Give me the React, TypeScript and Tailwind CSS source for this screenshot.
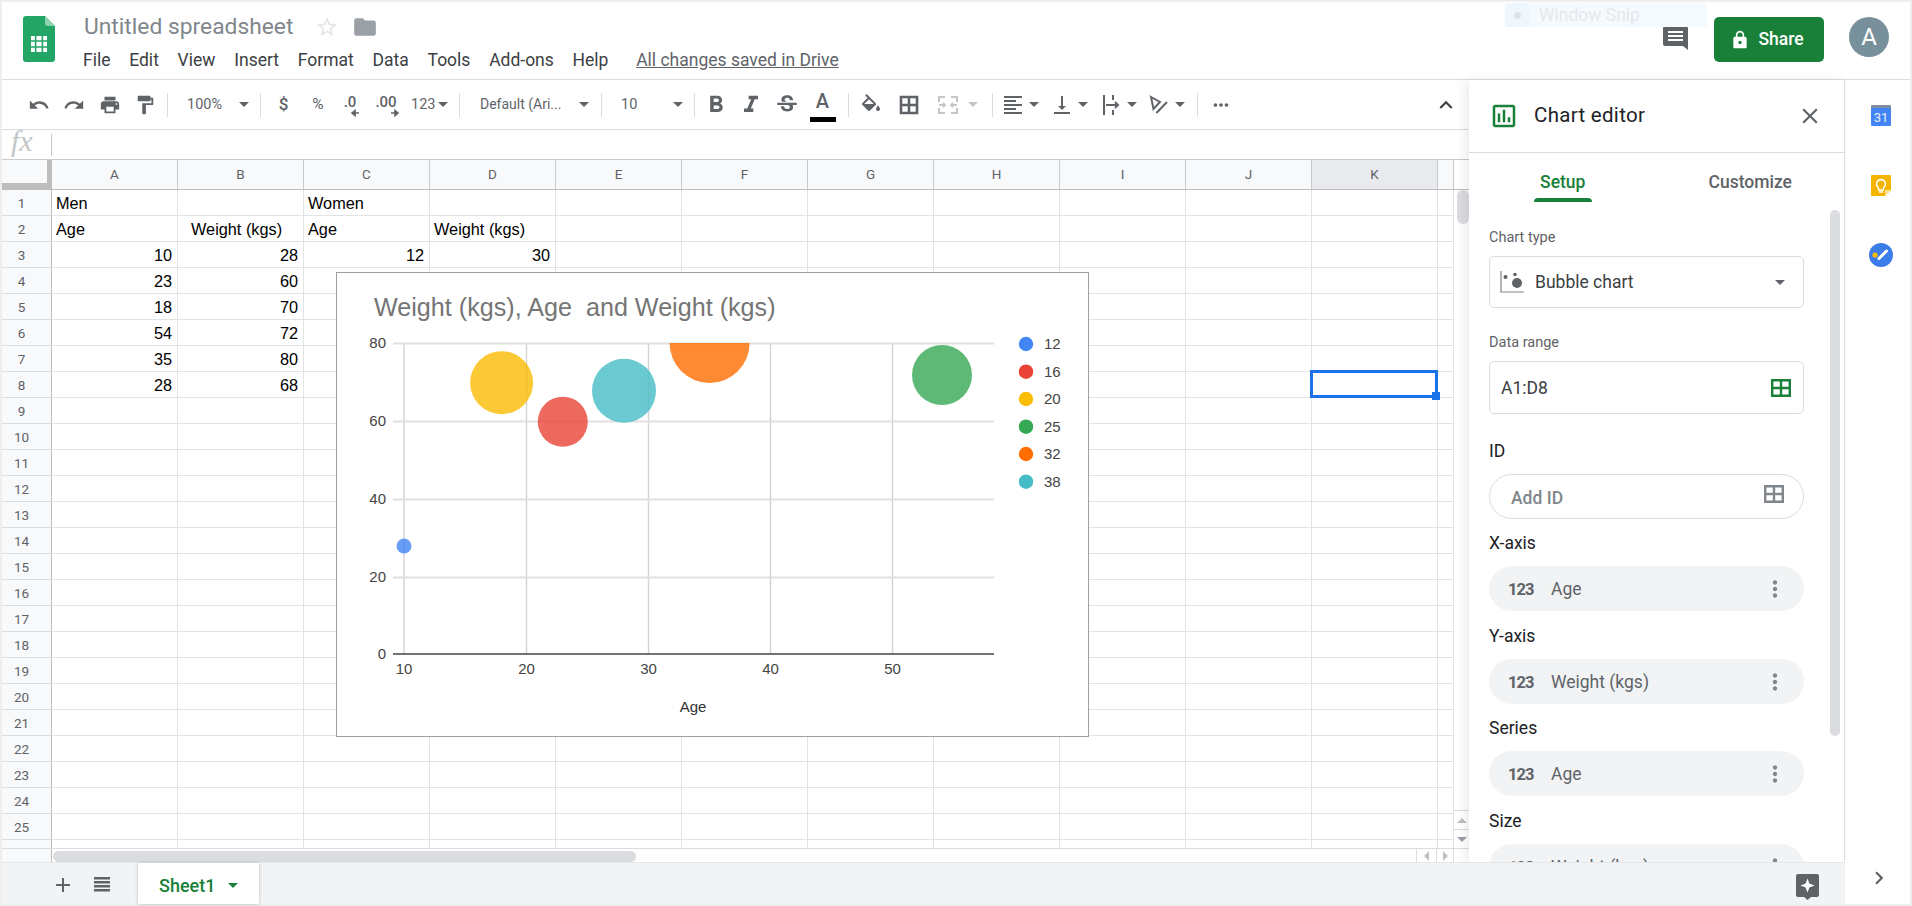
import React from "react";
import {
  MdUndo,
  MdRedo,
  MdPrint,
  MdFormatPaint,
  MdFormatBold,
  MdFormatItalic,
  MdStrikethroughS,
  MdFormatAlignLeft,
  MdVerticalAlignBottom,
  MdMoreHoriz,
  MdExpandLess,
  MdClose,
  MdStarBorder,
  MdFolder,
  MdLock,
  MdAdd,
  MdMoreVert,
  MdKeyboardArrowRight,
  MdOutlineAssessment,
} from "react-icons/md";

const COLUMNS = ["A", "B", "C", "D", "E", "F", "G", "H", "I", "J", "K"];
const MENU = ["File", "Edit", "View", "Insert", "Format", "Data", "Tools", "Add-ons", "Help"];

type Cell = { text: string; align?: "right" | "indent" };

const CELLS: Record<string, Cell> = {
  A1: { text: "Men" },
  C1: { text: "Women" },
  A2: { text: "Age" },
  B2: { text: "Weight (kgs)", align: "indent" },
  C2: { text: "Age" },
  D2: { text: "Weight (kgs)" },
  A3: { text: "10", align: "right" },
  B3: { text: "28", align: "right" },
  C3: { text: "12", align: "right" },
  D3: { text: "30", align: "right" },
  A4: { text: "23", align: "right" },
  B4: { text: "60", align: "right" },
  A5: { text: "18", align: "right" },
  B5: { text: "70", align: "right" },
  A6: { text: "54", align: "right" },
  B6: { text: "72", align: "right" },
  A7: { text: "35", align: "right" },
  B7: { text: "80", align: "right" },
  A8: { text: "28", align: "right" },
  B8: { text: "68", align: "right" },
};

function Caret({ className = "text-[#5f6368]" }: { className?: string }) {
  return (
    <svg width="10" height="5" viewBox="0 0 10 5" className={`shrink-0 ${className}`}>
      <path d="M0 0h10L5 5z" fill="currentColor" />
    </svg>
  );
}

function Sep() {
  return <div className="h-[24px] w-px shrink-0 bg-[#dadce0]" />;
}

function Tool({
  icon: Icon,
  width,
  size = 22,
}: {
  icon: React.ComponentType<{ size?: number }>;
  width: string;
  size?: number;
}) {
  return (
    <div className={`flex items-center justify-center ${width}`}>
      <Icon size={size} />
    </div>
  );
}

function SheetsLogo() {
  return (
    <svg width="32" height="46" viewBox="0 0 32 46" className="shrink-0">
      <path d="M3 0h19l10 10v33a3 3 0 0 1-3 3H3a3 3 0 0 1-3-3V3a3 3 0 0 1 3-3z" fill="#23a566" />
      <path d="M22 0l10 10h-7a3 3 0 0 1-3-3z" fill="#8ed1b1" />
      <path d="M8 20h16v16H8z" fill="#fff" />
      <path d="M12.6 20v16M19.4 20v16M8 25h16M8 31h16" stroke="#23a566" strokeWidth="1.6" />
    </svg>
  );
}

function DecimalIcon({ label, arrow }: { label: string; arrow: "left" | "right" }) {
  return (
    <svg width="30" height="30" viewBox="0 0 30 30" className="font-[Roboto,sans-serif]">
      <text x="15" y="17" textAnchor="middle" fontSize="15" fontWeight="500" fill="#5f6368">
        {label}
      </text>
      {arrow === "left" ? (
        <path d="M24 23h-7M20 20.5l-3 2.5 3 2.5z" stroke="#5f6368" strokeWidth="1.6" fill="#5f6368" />
      ) : (
        <path d="M20 23h7M24 20.5l3 2.5-3 2.5z" stroke="#5f6368" strokeWidth="1.6" fill="#5f6368" />
      )}
    </svg>
  );
}

function FillIcon() {
  return (
    <svg width="24" height="24" viewBox="0 0 24 24" fill="#5f6368">
      <path
        transform="translate(1 1)"
        d="M16.56 8.94L7.62 0 6.21 1.41l2.38 2.38-5.15 5.15c-.59.59-.59 1.54 0 2.12l5.5 5.5c.29.29.68.44 1.06.44s.77-.15 1.06-.44l5.5-5.5c.59-.58.59-1.53 0-2.12zM5.21 10L10 5.21 14.79 10H5.21zM19 11.5s-2 2.17-2 3.5c0 1.1.9 2 2 2s2-.9 2-2c0-1.33-2-3.5-2-3.5z"
      />
    </svg>
  );
}

function BordersIcon() {
  return (
    <svg width="24" height="24" viewBox="0 0 24 24" fill="none" stroke="#5f6368" strokeWidth="2.6">
      <path d="M4 4h16v16H4zM12 4v16M4 12h16" />
    </svg>
  );
}

function MergeIcon() {
  return (
    <svg width="24" height="24" viewBox="0 0 24 24" fill="none" stroke="#c4c7c9" strokeWidth="2">
      <path d="M9 4H3v5M15 4h6v5M9 20H3v-5M15 20h6v-5M3 12h6M7 10l2 2-2 2M21 12h-6M17 10l-2 2 2 2" />
    </svg>
  );
}

function WrapIcon() {
  return (
    <svg width="24" height="24" viewBox="0 0 24 24" fill="none" stroke="#5f6368" strokeWidth="2">
      <path d="M4 2v20M13 2v5M13 17v5M6 12h12M15 9l3 3-3 3" />
    </svg>
  );
}

function RotateIcon() {
  return (
    <svg width="24" height="24" viewBox="0 0 24 24" fill="none" stroke="#5f6368" strokeWidth="2">
      <path d="M4 4l9 5-6.500 7zM20 9L9.400 20" />
    </svg>
  );
}

function CommentIcon() {
  return (
    <svg width="25" height="24" viewBox="0 0 25 24">
      <path d="M2 0h21a2 2 0 0 1 2 2v22l-5-4H2a2 2 0 0 1-2-2V2a2 2 0 0 1 2-2z" fill="#5f6368" />
      <path d="M5 5h15v2H5zM5 9h15v2H5zM5 13h15v2H5z" fill="#fff" />
    </svg>
  );
}

function GridIcon({ color, className }: { color: string; className: string }) {
  return (
    <svg viewBox="0 0 20 18" className={className} fill="none" stroke={color} strokeWidth="2.4">
      <path d="M1.200 1.200h17.600v15.600H1.200zM10 1v16M1 9h18" />
    </svg>
  );
}

function BubbleIcon() {
  return (
    <svg width="24" height="22" viewBox="0 0 24 22" fill="#5f6368">
      <path d="M1 0v21h23" fill="none" stroke="#80868b" strokeWidth="1.2" />
      <circle cx="5.5" cy="6" r="2" />
      <circle cx="15" cy="3.5" r="1.8" />
      <circle cx="17" cy="12" r="5" />
    </svg>
  );
}

function CalendarIcon() {
  return (
    <svg width="20" height="21" viewBox="0 0 20 21" className="font-[Roboto,sans-serif]">
      <path d="M0 1a1 1 0 0 1 1-1h18a1 1 0 0 1 1 1v3H0z" fill="#7f8ea3" />
      <rect y="3" width="20" height="18" rx="1" fill="#4285f4" />
      <text x="10" y="17" textAnchor="middle" fontSize="13" fill="#e8f0fe">
        31
      </text>
    </svg>
  );
}

function KeepIcon() {
  return (
    <svg width="20" height="21" viewBox="0 0 20 21">
      <path d="M1 0h18a1 1 0 0 1 1 1v14l-6 6H1a1 1 0 0 1-1-1V1a1 1 0 0 1 1-1z" fill="#f4b400" />
      <path d="M14 21v-6h6z" fill="#fde293" />
      <path
        d="M10 4.500a4.500 4.500 0 0 0-2.500 8.200V15h5v-2.300A4.500 4.500 0 0 0 10 4.500zM8 17h4"
        fill="none"
        stroke="#fff"
        strokeWidth="1.3"
      />
    </svg>
  );
}

function TasksIcon() {
  return (
    <svg width="24" height="24" viewBox="0 0 24 24">
      <circle cx="12" cy="12" r="12" fill="#3b7de9" />
      <path d="M10 15.500L17.500 8" stroke="#fff" strokeWidth="3" strokeLinecap="round" />
      <circle cx="6" cy="12" r="2.6" fill="#fbbc04" />
    </svg>
  );
}

function ExploreIcon() {
  return (
    <svg width="23" height="26" viewBox="0 0 23 26">
      <path d="M2 0h19a2 2 0 0 1 2 2v19a2 2 0 0 1-2 2h-6l-3.500 3L8 23H2a2 2 0 0 1-2-2V2a2 2 0 0 1 2-2z" fill="#5f6368" />
      <path d="M11.500 4.500l1.900 5.100 5.100 1.900-5.100 1.900-1.900 5.100-1.900-5.100-5.100-1.900 5.100-1.900z" fill="#fff" />
    </svg>
  );
}

function SheetListIcon() {
  return (
    <svg width="16" height="15" viewBox="0 0 16 15" fill="#5f6368">
      <path d="M0 0h16v2.500H0zM0 4h16v2.500H0zM0 8h16v2.500H0zM0 12h16v2.500H0z" />
    </svg>
  );
}

function Header() {
  return (
    <header className="relative flex h-[78px] shrink-0 border-b border-[#dadce0] bg-white">
      <div className="ml-[21px] mt-[14px]">
        <SheetsLogo />
      </div>
      <div className="ml-[29px] flex flex-col pt-[10px]">
        <div className="flex h-[30px] items-center">
          <span className="text-[22.8px] leading-none text-[#80868b]">Untitled spreadsheet</span>
          <MdStarBorder size={24} className="ml-[22px] text-[#e3e5e6]" />
          <MdFolder size={26} className="ml-[13px] text-[#9aa0a6]" />
        </div>
        <nav className="-ml-[1px] mt-[4px] flex h-[28px] items-center gap-[18.75px] text-[17.5px] text-[#3c4043]">
          {MENU.map((item) => (
            <span key={item}>{item}</span>
          ))}
          <span className="ml-[9px] text-[#5f6368] underline">All changes saved in Drive</span>
        </nav>
      </div>
      <div className="absolute left-[1503px] top-[1px] flex h-[24px] w-[202px] items-center bg-[#f5faff]">
        <div className="flex h-full w-[24px] items-center justify-center bg-[#eef6fe]">
          <div className="h-[7px] w-[7px] rounded-full bg-[#dfe3e6]" />
        </div>
        <span className="ml-[10px] text-[17.5px] text-[#e6e8ea]">Window Snip</span>
      </div>
      <div className="ml-auto flex items-start pr-[21px] pt-[15px]">
        <div className="mt-[9px]">
          <CommentIcon />
        </div>
        <button className="ml-[26px] flex h-[45px] w-[110px] items-center justify-center gap-[8px] rounded-[5px] bg-[#188038] pr-[4px] text-[17.5px] font-medium text-white">
          <MdLock size={20} />
          Share
        </button>
        <div className="ml-[25px] flex h-[40px] w-[40px] items-center justify-center rounded-full bg-[#78909c] text-[24px] text-white">
          A
        </div>
      </div>
    </header>
  );
}

function Toolbar() {
  return (
    <div className="flex h-[50px] shrink-0 items-center border-b border-[#dadce0] pl-[19px] text-[14.5px] text-[#5f6368]">
      <Tool icon={MdUndo} width="w-[35px]" />
      <Tool icon={MdRedo} width="w-[36px]" />
      <Tool icon={MdPrint} width="w-[35px]" />
      <Tool icon={MdFormatPaint} width="w-[35px]" />
      <div className="ml-[5px]">
        <Sep />
      </div>
      <div className="flex w-[92px] items-center pl-[19px]">
        <span>100%</span>
        <span className="ml-auto mr-[11px]">
          <Caret />
        </span>
      </div>
      <Sep />
      <div className="ml-[5px] flex w-[35px] justify-center text-[17px] font-medium">$</div>
      <div className="flex w-[34px] justify-center text-[15.5px]">%</div>
      <div className="flex w-[30px] justify-center">
        <DecimalIcon label=".0" arrow="left" />
      </div>
      <div className="flex w-[42px] justify-center">
        <DecimalIcon label=".00" arrow="right" />
      </div>
      <div className="flex w-[50px] items-center pl-[4px]">
        <span>123</span>
        <span className="ml-[3px]">
          <Caret />
        </span>
      </div>
      <div className="ml-[2px]">
        <Sep />
      </div>
      <div className="flex w-[141px] items-center pl-[20px] text-[14px]">
        <span>Default (Ari...</span>
        <span className="ml-auto mr-[12px]">
          <Caret />
        </span>
      </div>
      <Sep />
      <div className="flex w-[92px] items-center pl-[19px]">
        <span>10</span>
        <span className="ml-auto mr-[11px]">
          <Caret />
        </span>
      </div>
      <Sep />
      <div className="ml-[3px] flex">
        <Tool icon={MdFormatBold} width="w-[35px]" size={28} />
        <Tool icon={MdFormatItalic} width="w-[35px]" size={28} />
        <Tool icon={MdStrikethroughS} width="w-[37px]" size={26} />
      </div>
      <div className="relative flex h-[34px] w-[35px] flex-col items-center">
        <span className="text-[20px] font-medium leading-[26px]">A</span>
        <div className="mt-auto h-[5px] w-[26px] bg-black" />
      </div>
      <div className="ml-[8px]">
        <Sep />
      </div>
      <div className="ml-[9px] flex items-center">
        <FillIcon />
      </div>
      <div className="ml-[15px] flex items-center">
        <BordersIcon />
      </div>
      <div className="ml-[15px] flex items-center">
        <MergeIcon />
        <span className="ml-[8px] mr-[14px]">
          <Caret className="text-[#c4c7c9]" />
        </span>
      </div>
      <Sep />
      <div className="ml-[8px] flex items-center">
        <MdFormatAlignLeft size={24} />
        <span className="ml-[4px]">
          <Caret />
        </span>
      </div>
      <div className="ml-[11px] flex items-center">
        <MdVerticalAlignBottom size={24} />
        <span className="ml-[4px]">
          <Caret />
        </span>
      </div>
      <div className="ml-[12px] flex items-center">
        <WrapIcon />
        <span className="ml-[3px]">
          <Caret />
        </span>
      </div>
      <div className="ml-[10px] flex items-center">
        <RotateIcon />
        <span className="ml-[4px] mr-[12px]">
          <Caret />
        </span>
      </div>
      <Sep />
      <Tool icon={MdMoreHoriz} width="ml-[5px] w-[35px]" />
      <MdExpandLess size={26} className="ml-auto mr-[10px] text-[#3c4043]" />
    </div>
  );
}

function FormulaBar() {
  return (
    <div className="flex h-[30px] shrink-0 items-center border-b border-[#c8cacc] bg-white">
      <span className="ml-[9px] -mt-[8px] w-[40px] font-['Liberation_Serif',serif] text-[30px] italic leading-none text-[#c4c7c9]">
        fx
      </span>
      <div className="h-[22px] w-px bg-[#c4c7c9]" />
    </div>
  );
}

function GridCell({ id }: { id: string }) {
  const cell = CELLS[id];
  const selected = id === "K8";
  let align = "pl-[4px]";
  if (cell?.align === "right") align = "justify-end pr-[5px]";
  if (cell?.align === "indent") align = "pl-[13px]";
  return (
    <div
      className={`relative flex h-[26px] w-[126px] shrink-0 items-center border-b border-r border-[#e2e3e3] pt-[1px] text-[16.3px] text-black ${align}`}
    >
      {cell?.text}
      {selected && (
        <>
          <div className="absolute -left-[2px] -top-[2px] z-10 h-[28px] w-[128px] border-[3px] border-[#1a73e8]" />
          <div className="absolute -bottom-[3px] -right-[3px] z-10 h-[8px] w-[8px] bg-[#1a73e8]" />
        </>
      )}
    </div>
  );
}

function BubbleChart() {
  const bubbles = [
    { cx: 404, cy: 546, r: 7.5, fill: "#4285f4" },
    { cx: 501.6, cy: 382.7, r: 31.5, fill: "#fbbc04" },
    { cx: 562.8, cy: 421.7, r: 25, fill: "#ea4335" },
    { cx: 624, cy: 390.7, r: 32, fill: "#46bdc6" },
    { cx: 709.6, cy: 343, r: 40, fill: "#ff6d01" },
    { cx: 942, cy: 375, r: 30, fill: "#34a853" },
  ];
  const legend = [
    { label: "12", cy: 344, fill: "#4285f4" },
    { label: "16", cy: 371.7, fill: "#ea4335" },
    { label: "20", cy: 399, fill: "#fbbc04" },
    { label: "25", cy: 426.7, fill: "#34a853" },
    { label: "32", cy: 454, fill: "#ff6d01" },
    { label: "38", cy: 481.7, fill: "#46bdc6" },
  ];
  const yTicks = [
    { label: "80", y: 343 },
    { label: "60", y: 421 },
    { label: "40", y: 499 },
    { label: "20", y: 577 },
    { label: "0", y: 654 },
  ];
  const xTicks = [
    { label: "10", x: 404 },
    { label: "20", x: 526.5 },
    { label: "30", x: 648.5 },
    { label: "40", x: 770.5 },
    { label: "50", x: 892.5 },
  ];

  return (
    <div className="absolute left-[334px] top-[82px] z-20 h-[465px] w-[753px] border border-[#9aa0a6] bg-white">
      <svg width="751" height="463" viewBox="337 273 751 463" className="font-['Liberation_Sans',sans-serif]">
        <defs>
          <clipPath id="plot">
            <rect x="393" y="343" width="601" height="311" />
          </clipPath>
        </defs>
        <text x="374" y="316" fontSize="25.15" fill="#757575" className="whitespace-pre">
          {"Weight (kgs), Age  and Weight (kgs)"}
        </text>
        {xTicks.map((t) => (
          <line key={t.label} x1={t.x} x2={t.x} y1="343" y2="654" stroke="#d3d3d3" strokeWidth="1.4" />
        ))}
        {yTicks.slice(0, 4).map((t) => (
          <line key={t.label} x1="393" x2="994" y1={t.y + 0.5} y2={t.y + 0.5} stroke="#e0e0e0" strokeWidth="1.8" />
        ))}
        <line x1="393" x2="994" y1="654" y2="654" stroke="#444" strokeWidth="1.4" />
        <g clipPath="url(#plot)">
          {bubbles.map((b) => (
            <circle key={b.cx} cx={b.cx} cy={b.cy} r={b.r} fill={b.fill} fillOpacity="0.8" />
          ))}
        </g>
        {yTicks.map((t) => (
          <text key={t.label} x="386" y={t.y + 5} textAnchor="end" fontSize="15" fill="#444">
            {t.label}
          </text>
        ))}
        {xTicks.map((t) => (
          <text key={t.label} x={t.x} y="673.5" textAnchor="middle" fontSize="15" fill="#444">
            {t.label}
          </text>
        ))}
        <text x="693" y="711.5" textAnchor="middle" fontSize="15" fill="#333">
          Age
        </text>
        {legend.map((l) => (
          <g key={l.label}>
            <circle cx="1026" cy={l.cy} r="7.2" fill={l.fill} />
            <text x="1044" y={l.cy + 5} fontSize="15" fill="#444">
              {l.label}
            </text>
          </g>
        ))}
      </svg>
    </div>
  );
}

function SheetGrid() {
  const rows = Array.from({ length: 26 }, (_, i) => i + 1);
  return (
    <div className="flex min-h-0 flex-1 flex-col bg-white">
      <div className="flex h-[30px] shrink-0 border-b border-[#bdbdbd] bg-[#f8f9fa] text-[13.5px] text-[#5f6368]">
        <div className="h-[29px] w-[50px] shrink-0 border-b-[6px] border-r-[5px] border-[#bdbdbd]" />
        {COLUMNS.map((c) => (
          <div
            key={c}
            className={`flex w-[126px] shrink-0 items-center justify-center border-r border-[#c8cacc] ${c === "K" ? "bg-[#e8eaed]" : ""}`}
          >
            {c}
          </div>
        ))}
        <div className="w-[16px] shrink-0 border-r border-[#c8cacc]" />
      </div>
      <div className="relative h-[659px] shrink-0 overflow-hidden border-b border-[#dadce0] font-['Liberation_Sans',sans-serif]">
        {rows.map((n) => (
          <div key={n} className="flex h-[26px]">
            <div className="flex h-[26px] w-[50px] shrink-0 items-center justify-center border-b border-r border-b-[#dadce0] border-r-[#bdbdbd] bg-[#f8f9fa] pr-[10px] pt-[1px] font-[Roboto,sans-serif] text-[13.5px] text-[#5f6368]">
              {n <= 25 ? n : ""}
            </div>
            {COLUMNS.map((c) => (
              <GridCell key={c} id={`${c}${n}`} />
            ))}
            <div className="h-[26px] w-[16px] shrink-0 border-b border-r border-[#e2e3e3]" />
          </div>
        ))}
        <BubbleChart />
      </div>
    </div>
  );
}

function VerticalScrollbar() {
  return (
    <div className="flex w-[15px] shrink-0 flex-col">
      <div className="h-[30px] shrink-0 border-b border-[#bdbdbd] bg-white" />
      <div className="flex flex-1 flex-col bg-white pl-[3px]">
        <div className="h-[34px] w-[12px] rounded-[6px] bg-[#dadce0]" />
      </div>
      <div className="flex h-[20px] items-center justify-center border-y border-[#dadce0]">
        <svg width="10" height="5" viewBox="0 0 10 5">
          <path d="M0 5h10L5 0z" fill="#bdc1c6" />
        </svg>
      </div>
      <div className="flex h-[19px] items-center justify-center border-b border-[#dadce0]">
        <Caret className="text-[#9aa0a6]" />
      </div>
    </div>
  );
}

function HorizontalScrollbar() {
  return (
    <div className="flex h-[13px] shrink-0 bg-white">
      <div className="w-[50px] shrink-0 border-r border-[#bdbdbd] bg-[#f8f9fa]" />
      <div className="flex flex-1 items-end">
        <div className="ml-[1px] h-[11px] w-[583px] rounded-[6px] bg-[#dadce0]" />
        <div className="ml-auto flex h-full">
          <div className="flex w-[20px] items-center justify-center border-l border-[#dadce0]">
            <svg width="5" height="10" viewBox="0 0 5 10">
              <path d="M5 0v10L0 5z" fill="#bdc1c6" />
            </svg>
          </div>
          <div className="flex w-[18px] items-center justify-center border-l border-r border-[#dadce0]">
            <svg width="5" height="10" viewBox="0 0 5 10">
              <path d="M0 0v10l5-5z" fill="#bdc1c6" />
            </svg>
          </div>
          <div className="w-[15px]" />
        </div>
      </div>
    </div>
  );
}

function SectionLabel({ children, className }: { children: string; className: string }) {
  return <div className={`h-[22px] text-[17.5px] leading-[22px] text-[#202124] ${className}`}>{children}</div>;
}

function SmallLabel({ children, className }: { children: string; className: string }) {
  return <div className={`h-[20px] text-[14.5px] leading-[20px] text-[#5f6368] ${className}`}>{children}</div>;
}

function FieldChip({ label }: { label: string }) {
  return (
    <div className="mt-[12px] flex h-[45px] shrink-0 items-center rounded-full bg-[#f1f3f4] pl-[19px] pr-[16px]">
      <span className="w-[43px] pt-[3px] text-[16.5px] font-bold tracking-[-1px] text-[#5f6368]">123</span>
      <span className="pt-[2px] text-[17.5px] text-[#5f6368]">{label}</span>
      <MdMoreVert size={26} className="ml-auto text-[#80868b]" />
    </div>
  );
}

function ChartEditor() {
  return (
    <aside className="relative z-10 flex w-[376px] shrink-0 flex-col overflow-hidden border-r border-[#dadce0] bg-white shadow-[-4px_0_10px_rgba(0,0,0,0.08)]">
      <div className="flex h-[73px] shrink-0 items-center border-b border-[#dadce0] pl-[20px] pr-[21px]">
        <MdOutlineAssessment size={30} className="text-[#188038]" />
        <span className="ml-[15px] -mt-[2px] text-[20.5px] tracking-[0.3px] text-[#202124]">Chart editor</span>
        <MdClose size={26} className="ml-auto text-[#5f6368]" />
      </div>
      <div className="grid h-[49px] shrink-0 grid-cols-2 text-[17.5px] font-medium">
        <div className="flex flex-col items-center pt-[18px] text-[#188038]">
          <span className="h-[22px] leading-[22px]">Setup</span>
          <div className="mt-[5px] h-[4px] w-[58px] rounded-t-[4px] bg-[#188038]" />
        </div>
        <div className="flex flex-col items-center pt-[18px] text-[#5f6368]">
          <span className="h-[22px] leading-[22px]">Customize</span>
        </div>
      </div>
      <div className="flex flex-col px-[20px] pr-[40px]">
        <SmallLabel className="mt-[26px]">Chart type</SmallLabel>
        <div className="mt-[8px] flex h-[52px] shrink-0 items-center rounded-[5px] border border-[#dadce0] pl-[10px] pr-[18px]">
          <BubbleIcon />
          <span className="ml-[11px] pt-[1px] text-[17.5px] text-[#3c4043]">Bubble chart</span>
          <Caret className="ml-auto text-[#5f6368]" />
        </div>
        <SmallLabel className="mt-[25px]">Data range</SmallLabel>
        <div className="mt-[8px] flex h-[53px] shrink-0 items-center rounded-[5px] border border-[#dadce0] pl-[11px] pr-[12px]">
          <span className="pt-[2px] text-[17.5px] text-[#3c4043]">A1:D8</span>
          <GridIcon color="#188038" className="ml-auto h-[18px] w-[20px]" />
        </div>
        <SectionLabel className="mt-[26px]">ID</SectionLabel>
        <div className="mt-[12px] flex h-[45px] shrink-0 items-center rounded-full border border-[#dadce0] pl-[21px] pr-[19px]">
          <span className="pt-[4px] text-[17.5px] font-medium text-[#80868b]">Add ID</span>
          <GridIcon color="#80868b" className="ml-auto -mt-[6px] h-[18px] w-[20px]" />
        </div>
        <SectionLabel className="mt-[13px]">X-axis</SectionLabel>
        <FieldChip label="Age" />
        <SectionLabel className="mt-[14px]">Y-axis</SectionLabel>
        <FieldChip label="Weight (kgs)" />
        <SectionLabel className="mt-[13px]">Series</SectionLabel>
        <FieldChip label="Age" />
        <SectionLabel className="mt-[14px]">Size</SectionLabel>
        <FieldChip label="Weight (kgs)" />
      </div>
      <div className="absolute right-[4px] top-[130px] h-[526px] w-[10px] rounded-[5px] bg-[#dadce0]" />
    </aside>
  );
}

function BottomBar() {
  return (
    <div className="relative z-20 flex h-[42px] shrink-0 items-stretch border-t border-[#e4e6e8] bg-[#f1f3f4] pl-[49px] pr-[26px] text-[#5f6368]">
      <div className="flex items-center pt-[2px]">
        <MdAdd size={24} />
        <div className="ml-[19px]">
          <SheetListIcon />
        </div>
      </div>
      <div className="ml-[28px] flex w-[121px] items-center bg-white pl-[21px] pt-[3px] text-[18px] text-[#188038] shadow-[0_0_3px_rgba(60,64,67,0.3)]">
        <span className="font-medium">Sheet1</span>
        <Caret className="ml-[13px] text-[#188038]" />
      </div>
      <div className="ml-auto flex items-center pt-[6px]">
        <ExploreIcon />
      </div>
    </div>
  );
}

function SideStrip() {
  return (
    <div className="flex w-[65px] shrink-0 flex-col items-center bg-white pb-[13px] pl-[7px] pt-[25px]">
      <CalendarIcon />
      <div className="mt-[49px]">
        <KeepIcon />
      </div>
      <div className="mt-[47px]">
        <TasksIcon />
      </div>
      <MdKeyboardArrowRight size={26} className="mt-auto -ml-[4px] text-[#5f6368]" />
    </div>
  );
}

export default function App() {
  return (
    <div className="flex h-[906px] w-[1912px] flex-col overflow-hidden bg-[#eeeeee] p-[2px] font-[Roboto,sans-serif]">
      <Header />
      <div className="flex min-h-0 flex-1">
        <div className="flex min-w-0 flex-1 flex-col">
          <div className="flex min-h-0 flex-1">
            <div className="flex w-[1467px] shrink-0 flex-col bg-white">
              <Toolbar />
              <FormulaBar />
              <div className="flex min-h-0 flex-1">
                <div className="min-w-0 flex-1">
                  <SheetGrid />
                </div>
                <VerticalScrollbar />
              </div>
              <HorizontalScrollbar />
            </div>
            <ChartEditor />
          </div>
          <BottomBar />
        </div>
        <SideStrip />
      </div>
    </div>
  );
}
